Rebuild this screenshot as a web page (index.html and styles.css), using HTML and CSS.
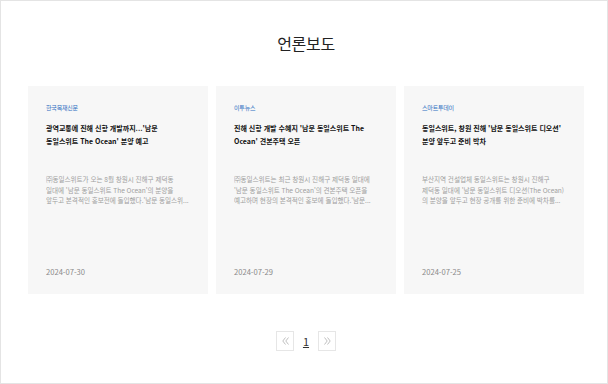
FILE: index.html
```html
<!DOCTYPE html>
<html lang="ko">
<head>
	<meta charset="UTF-8">
	<title>언론보도</title>
	<link rel="stylesheet" href="styles.css">
</head>
<body>
<div class="page">
	<h2 class="page-title">언론보도</h2>
	<ul class="news">
		<li class="card">
			<span class="card-source">한국목재신문</span>
			<h3 class="card-title">광역교통에 진해 신항 개발까지...'남문 동일스위트 The Ocean' 분양 예고</h3>
			<p class="card-desc">㈜동일스위트가 오는 8월 창원시 진해구 제덕동 일대에 '남문 동일스위트 The Ocean'의 분양을 앞두고 본격적인 홍보전에 돌입했다.'남문 동일스위...</p>
			<span class="card-date">2024-07-30</span>
		</li>
		<li class="card">
			<span class="card-source">이투뉴스</span>
			<h3 class="card-title">진해 신항 개발 수혜지 '남문 동일스위트 The Ocean' 견본주택 오픈</h3>
			<p class="card-desc">㈜동일스위트는 최근 창원시 진해구 제덕동 일대에 '남문 동일스위트 The Ocean'의 견본주택 오픈을 예고하며 현장의 본격적인 홍보에 돌입했다.'남문...</p>
			<span class="card-date">2024-07-29</span>
		</li>
		<li class="card">
			<span class="card-source">스마트투데이</span>
			<h3 class="card-title">동일스위트, 창원 진해 '남문 동일스위트 디오션' 분양 앞두고 준비 박차</h3>
			<p class="card-desc">부산지역 건설업체 동일스위트는 창원시 진해구 제덕동 일대에 '남문 동일스위트 디오션(The Ocean)의 분양을 앞두고 현장 공개를 위한 준비에 박차를...</p>
			<span class="card-date">2024-07-25</span>
		</li>
	</ul>
	<div class="paging">
		<a class="paging-btn" href="#">
			<svg width="7" height="8" viewBox="0 0 7 8"><polyline points="3.5,0.5 0.8,4 3.5,7.5"/><polyline points="6.5,0.5 3.8,4 6.5,7.5"/></svg>
		</a>
		<a class="paging-num" href="#">1</a>
		<a class="paging-btn" href="#">
			<svg width="7" height="8" viewBox="0 0 7 8"><polyline points="0.5,0.5 3.2,4 0.5,7.5"/><polyline points="3.5,0.5 6.2,4 3.5,7.5"/></svg>
		</a>
	</div>
</div>
</body>
</html>
```

FILE: styles.css
```css
html, body{
	margin: 0;
}
body{
	background: #fff;
	font-family: "Noto Sans CJK KR", "Noto Sans", sans-serif;
}
.page{
	box-sizing: border-box;
	height: 384px;
	border: 1px solid #e4e4e4;
	padding-left: 4px;
}
.page-title{
	margin: 30px 0 0;
	font-size: 16px;
	line-height: 25px;
	font-weight: 400;
	text-align: center;
	color: #222;
	letter-spacing: -0.3px;
}
.news{
	list-style: none;
	margin: 30px 0 0;
	padding: 0;
	display: grid;
	grid-template-columns: repeat(3, 180px);
	gap: 8px;
	justify-content: center;
}
.card{
	box-sizing: border-box;
	height: 208px;
	background: #f7f7f7;
	padding: 16px 16px 16px 18px;
	display: flex;
	flex-direction: column;
}
.card-source{
	font-size: 6px;
	line-height: 11px;
	color: #2f6fc2;
	letter-spacing: -0.2px;
}
.card-title{
	margin: 9px 0 0;
	padding-right: 4px;
	font-size: 7px;
	line-height: 12.5px;
	font-weight: 700;
	color: #111;
	word-break: keep-all;
}
.card-desc{
	margin: 27px 0 0;
	font-size: 6.6px;
	line-height: 10.5px;
	letter-spacing: -0.05px;
	color: #a0a0a0;
	word-break: keep-all;
	display: -webkit-box;
	-webkit-line-clamp: 3;
	-webkit-box-orient: vertical;
	overflow: hidden;
}
.card-date{
	margin-top: auto;
	font-size: 7.6px;
	line-height: 12px;
	color: #8a8a8a;
}
.paging{
	display: flex;
	justify-content: center;
	align-items: center;
	margin-top: 37px;
}
.paging-btn{
	box-sizing: border-box;
	width: 18px;
	height: 20px;
	border: 1px solid #e6e6e6;
	display: flex;
	align-items: center;
	justify-content: center;
}
.paging-btn svg{
	fill: none;
	stroke: #b0b0b0;
	stroke-width: 0.8;
}
.paging-num{
	width: 24px;
	text-align: center;
	font-size: 11px;
	line-height: 20px;
	color: #333;
	text-decoration: underline;
}
```
